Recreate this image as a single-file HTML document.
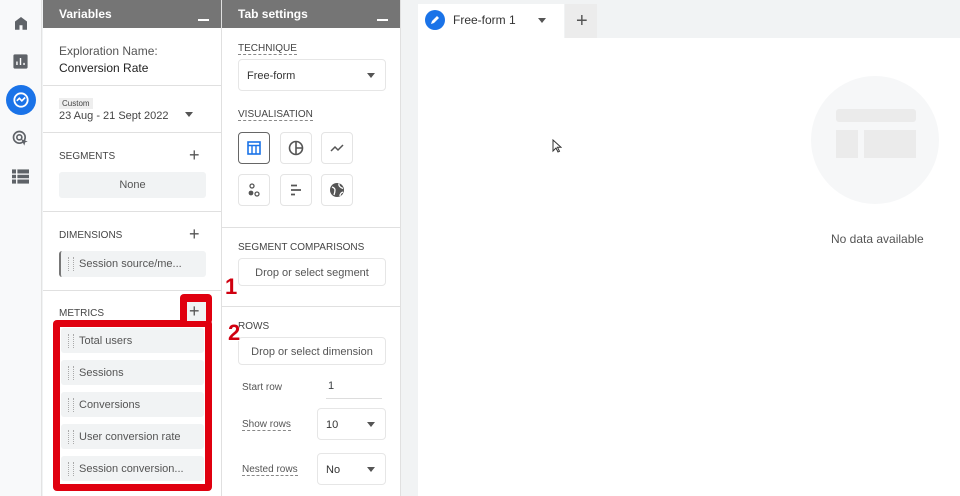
<!DOCTYPE html>
<html><head><style>
*{box-sizing:border-box;margin:0;padding:0}
body{width:960px;height:496px;overflow:hidden;font-family:"Liberation Sans",sans-serif;background:#f1f3f4;position:relative;color:#3c4043}
.a{position:absolute}
.nav{left:0;top:0;width:42px;height:496px;background:#f8f9fa;border-right:1px solid #e3e3e3}
.panel{top:0;height:496px;background:#fff;border-right:1px solid #e0e0e0}
.hdr{position:absolute;left:0;top:0;right:0;height:28px;background:#757575;color:#fff;font-weight:bold;font-size:12px;padding:7px 16px}
.hdr i{position:absolute;right:12px;top:19px;width:11px;height:2px;background:#fff}
.lbl{font-size:10px;color:#444;position:absolute}
.sep{position:absolute;left:0;right:0;height:1px;background:#e0e0e0}
.plus{position:absolute;font-size:18px;color:#555;line-height:1}
.chip{position:absolute;left:16px;width:147px;height:26px;background:#f1f3f4;border-radius:3px;font-size:11px;color:#555;padding:7px 0 0 18px}
.chip:before{content:"";position:absolute;left:7px;top:6px;width:4px;height:14px;border-left:1px dotted #aaa;border-right:1px dotted #aaa}
.box{position:absolute;border:1px solid #e6e6e6;border-radius:4px;background:#fff;font-size:11px;color:#333}
.dd:after{content:"";position:absolute;right:10px;top:50%;margin-top:-2px;border:4px solid transparent;border-top:5px solid #555;border-bottom:0}
.vb{position:absolute;width:32px;height:32px;border:1px solid #e4e4e4;border-radius:4px;background:#fff}
.u{border-bottom:1px dashed #888}
.num{font-size:22px;font-weight:bold;color:#d00010;line-height:1;text-shadow:-1px 1px 0 #fff,1px 1px 0 #fff,-1px -1px 0 #fff}
</style></head><body>
<div class="a nav">
<svg class="a" style="left:12px;top:14px" width="18" height="18" viewBox="0 0 24 24"><path d="M4 21V10l8-6 8 6v11h-6v-6h-4v6z" fill="#5f6368"/></svg>
<svg class="a" style="left:12px;top:53px" width="17" height="17" viewBox="0 0 24 24"><rect x="2" y="2" width="20" height="20" rx="2" fill="#5f6368"/><path d="M7 17v-5M12 17V7M17 17v-3" stroke="#fff" stroke-width="2"/></svg>
<div class="a" style="left:6px;top:85px;width:30px;height:30px;border-radius:50%;background:#1a73e8"></div>
<svg class="a" style="left:11px;top:90px" width="20" height="20" viewBox="0 0 24 24"><circle cx="12" cy="12" r="8" fill="none" stroke="#fff" stroke-width="2.2"/><path d="M7 13l3-3 3 3 4-4" fill="none" stroke="#fff" stroke-width="2"/></svg>
<svg class="a" style="left:11px;top:129px" width="20" height="20" viewBox="0 0 24 24"><circle cx="10" cy="10" r="7" fill="none" stroke="#5f6368" stroke-width="2"/><circle cx="10" cy="10" r="3" fill="none" stroke="#5f6368" stroke-width="2"/><path d="M12 12l8 3-3 1-1 4z" fill="#5f6368"/></svg>
<svg class="a" style="left:12px;top:169px" width="17" height="15" viewBox="0 0 18 15"><rect width="18" height="15" fill="#5f6368"/><path d="M0 5h18M0 10h18M5 0v15" stroke="#fff" stroke-width="1.4"/></svg>
</div>

<div class="a panel" style="left:43px;width:179px">
<div class="hdr">Variables<i></i></div>
<div class="a" style="left:16px;top:43px;font-size:12px;color:#555;line-height:17px">Exploration Name:<br><span style="color:#222">Conversion Rate</span></div>
<div class="sep" style="top:85px"></div>
<div class="a" style="left:16px;top:98px;font-size:8px;background:#eee;padding:1px 3px;color:#444">Custom</div>
<div class="a" style="left:16px;top:110px;font-size:11px;color:#444">23 Aug - 21 Sept 2022</div>
<div class="a dd" style="left:140px;top:104px;width:20px;height:20px;position:absolute"></div>
<div class="sep" style="top:132px"></div>
<div class="lbl" style="left:16px;top:151px">SEGMENTS</div><div class="plus" style="left:146px;top:146px">+</div>
<div class="a" style="left:16px;top:172px;width:147px;height:26px;background:#f1f3f4;border-radius:3px;font-size:11px;color:#555;text-align:center;padding-top:7px">None</div>
<div class="sep" style="top:211px"></div>
<div class="lbl" style="left:16px;top:230px">DIMENSIONS</div><div class="plus" style="left:146px;top:225px">+</div>
<div class="chip" style="top:251px;border-left:2px solid #777">Session source/me...</div>
<div class="sep" style="top:290px"></div>
<div class="lbl" style="left:16px;top:308px">METRICS</div>
</div>
<div class="a" style="left:180px;top:294px;width:32px;height:30px;background:#e0000f;border-radius:4px"></div>
<div class="a" style="left:53px;top:320px;width:159px;height:171px;background:#e0000f;border-radius:4px"></div>
<div class="a" style="left:187px;top:302px;width:19px;height:19px;background:#f1f3f4"></div>
<div class="plus" style="left:189px;top:302px">+</div>
<div class="a" style="left:60px;top:327px;width:145px;height:157px;background:#fff"></div>
<div class="chip" style="left:61px;top:328px;width:143px;height:25px">Total users</div>
<div class="chip" style="left:61px;top:360px;width:143px;height:25px">Sessions</div>
<div class="chip" style="left:61px;top:392px;width:143px;height:25px">Conversions</div>
<div class="chip" style="left:61px;top:424px;width:143px;height:25px">User conversion rate</div>
<div class="chip" style="left:61px;top:456px;width:143px;height:25px">Session conversion...</div>

<div class="a panel" style="left:222px;width:179px">
<div class="hdr">Tab settings<i></i></div>
<div class="lbl" style="left:16px;top:43px"><span class="u">TECHNIQUE</span></div>
<div class="box dd" style="left:16px;top:59px;width:148px;height:32px;padding:10px 8px">Free-form</div>
<div class="lbl" style="left:16px;top:109px"><span class="u">VISUALISATION</span></div>
<div class="vb" style="left:16px;top:132px;border-color:#666"><svg width="30" height="30" viewBox="0 0 30 30"><rect x="9" y="9" width="12" height="12" fill="none" stroke="#1a73e8" stroke-width="1.6"/><path d="M9 12.5h12M13 12.5V21M17 12.5V21" stroke="#1a73e8" stroke-width="1.4"/></svg></div>
<div class="vb" style="left:58px;top:132px"><svg width="30" height="30" viewBox="0 0 30 30"><circle cx="15" cy="15" r="6.5" fill="none" stroke="#555" stroke-width="1.6"/><path d="M15 8.5v13M15 15h6.5" stroke="#555" stroke-width="1.6"/></svg></div>
<div class="vb" style="left:99px;top:132px"><svg width="30" height="30" viewBox="0 0 30 30"><path d="M9 18l4-4 3 3 5-5" fill="none" stroke="#555" stroke-width="1.5"/></svg></div>
<div class="vb" style="left:16px;top:174px"><svg width="30" height="30" viewBox="0 0 30 30"><circle cx="13" cy="11" r="2" fill="none" stroke="#555" stroke-width="1.3"/><circle cx="12" cy="18" r="2.4" fill="#555"/><circle cx="18" cy="19" r="2" fill="none" stroke="#555" stroke-width="1.3"/></svg></div>
<div class="vb" style="left:58px;top:174px"><svg width="30" height="30" viewBox="0 0 30 30"><path d="M10 10.5h6M10 15h10M10 19.5h4" stroke="#555" stroke-width="1.8"/></svg></div>
<div class="vb" style="left:99px;top:174px"><svg width="30" height="30" viewBox="0 0 30 30"><circle cx="15" cy="15" r="7" fill="#555"/><path d="M10 12q3 1 3 3t-1 5M17 8.5q-1 3 4 5M18 21q0-3 3-4" fill="none" stroke="#fff" stroke-width="1.3"/></svg></div>
<div class="sep" style="top:227px"></div>
<div class="lbl" style="left:16px;top:242px">SEGMENT COMPARISONS</div>
<div class="box" style="left:16px;top:258px;width:148px;height:28px;text-align:center;padding-top:8px;color:#555">Drop or select segment</div>
<div class="sep" style="top:306px"></div>
<div class="lbl" style="left:16px;top:321px">ROWS</div>
<div class="box" style="left:16px;top:337px;width:148px;height:28px;text-align:center;padding-top:8px;color:#555">Drop or select dimension</div>
<div class="a" style="left:20px;top:382px;font-size:10px;color:#555">Start row</div>
<div class="a" style="left:104px;top:380px;width:56px;height:19px;border-bottom:1px solid #ddd;font-size:11px;padding-left:2px">1</div>
<div class="a" style="left:20px;top:419px;font-size:10px;color:#555"><span class="u">Show rows</span></div>
<div class="box dd" style="left:95px;top:408px;width:69px;height:32px;padding:10px 8px">10</div>
<div class="a" style="left:20px;top:464px;font-size:10px;color:#555"><span class="u">Nested rows</span></div>
<div class="box dd" style="left:95px;top:453px;width:69px;height:32px;padding:10px 8px">No</div>
</div>
<div class="a num" style="left:225px;top:276px">1</div>
<div class="a num" style="left:228px;top:322px">2</div>

<div class="a" style="left:418px;top:38px;width:542px;height:458px;background:#fff"></div>
<div class="a" style="left:418px;top:4px;width:146px;height:34px;background:#fff"></div>
<div class="a" style="left:425px;top:10px;width:20px;height:20px;border-radius:50%;background:#1a73e8"></div>
<svg class="a" style="left:429px;top:14px" width="12" height="12" viewBox="0 0 12 12"><path d="M2 10l1-3 5-5 2 2-5 5z" fill="#fff"/></svg>
<div class="a" style="left:453px;top:13px;font-size:12px;color:#333">Free-form 1</div>
<div class="a dd" style="left:534px;top:10px;width:22px;height:20px"></div>
<div class="a" style="left:565px;top:4px;width:32px;height:34px;background:#ececec"></div>
<div class="plus" style="left:576px;top:11px;font-size:20px">+</div>
<div class="a" style="left:811px;top:76px;width:128px;height:128px;border-radius:50%;background:#f6f7f8"></div>
<div class="a" style="left:836px;top:109px;width:80px;height:13px;background:#ebebeb;border-radius:3px"></div>
<div class="a" style="left:836px;top:130px;width:22px;height:28px;background:#ebebeb"></div>
<div class="a" style="left:864px;top:130px;width:52px;height:28px;background:#ebebeb"></div>
<div class="a" style="left:831px;top:232px;font-size:12px;color:#555">No data available</div>
<svg class="a" style="left:552px;top:139px" width="10" height="14" viewBox="0 0 10 14"><path d="M1 1v11l3-3 2 4 1.5-.7-2-4H9z" fill="#fff" stroke="#333" stroke-width="1"/></svg>
</body></html>
